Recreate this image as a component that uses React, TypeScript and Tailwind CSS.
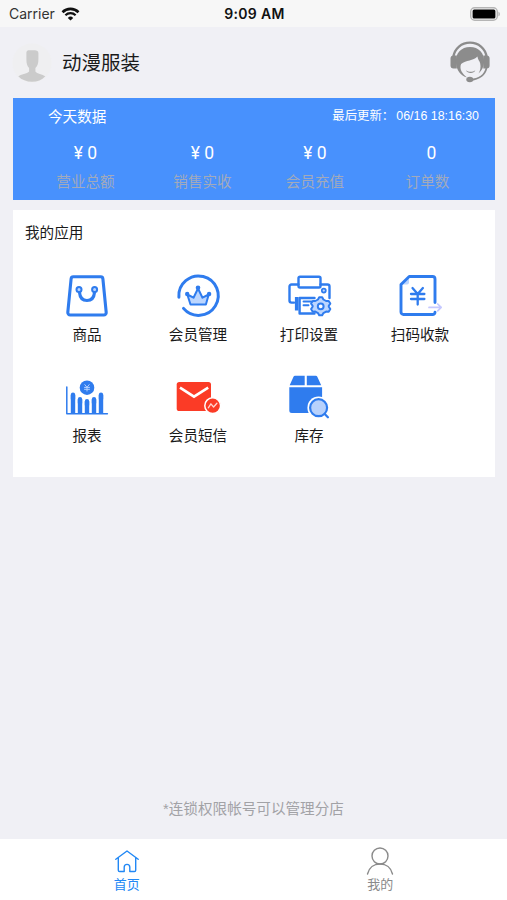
import type { ReactNode } from 'react'

const BLUE = '#2f7cee'

const stats = [
  { label: '营业总额', value: '¥ 0', width: 'w-[117px]' },
  { label: '销售实收', value: '¥ 0', width: 'w-[117px]' },
  { label: '会员充值', value: '¥ 0', width: 'w-[108px]' },
  { label: '订单数', value: '0', width: 'w-[125px]', labelClass: 'pr-[8px]' },
]

function AppIcon({ children }: { children: ReactNode }) {
  return (
    <svg className="size-[44px] shrink-0 overflow-visible" viewBox="0 0 44 44" fill="none" strokeLinecap="round" strokeLinejoin="round">
      {children}
    </svg>
  )
}

function BagIcon() {
  return (
    <AppIcon>
      <g stroke={BLUE} strokeWidth="3.1">
        <path d="M8.3 2.8h27.4a2.2 2.2 0 0 1 2.2 2l3.3 33.6a2.4 2.4 0 0 1-2.4 2.6H5.2a2.4 2.4 0 0 1-2.4-2.6L6.1 4.8a2.2 2.2 0 0 1 2.2-2Z" />
        <path d="M14.5 18.5C15 24 18 26.5 22 26.5s7-2.5 7.5-8" />
      </g>
      <circle cx="14" cy="15.5" r="2.5" fill="#bcd6ff" stroke={BLUE} strokeWidth="2" />
      <circle cx="29.6" cy="15.5" r="2.5" fill="#bcd6ff" stroke={BLUE} strokeWidth="2" />
    </AppIcon>
  )
}

function MemberIcon() {
  return (
    <AppIcon>
      <path d="M2.9 23.2A19.7 19.7 0 1 1 7.5 34.4" stroke={BLUE} strokeWidth="3" />
      <path d="m11.3 20.5 6.2 3.2L22 14.5l4.5 9.2 6.2-3.2-2.8 10H14.500Z" fill="#bcd6ff" stroke={BLUE} strokeWidth="2" />
      <g fill={BLUE}>
        <circle cx="11.2" cy="20" r="2.2" />
        <circle cx="22" cy="13.8" r="2.3" />
        <circle cx="33.1" cy="20" r="2.2" />
      </g>
    </AppIcon>
  )
}

function PrinterIcon() {
  return (
    <AppIcon>
      <g stroke={BLUE} strokeWidth="2.4">
        <path d="M11.5 10.5h-7a2 2 0 0 0-2 2v14.1a2 2 0 0 0 2 2H7M33.5 10.5h7a2 2 0 0 1 2 2V24" />
        <rect x="11.5" y="2.7" width="22" height="10.8" rx="1.5" />
        <circle cx="36.8" cy="16.6" r="2" fill="#bcd6ff" strokeWidth="1.7" />
        <path d="M9.700 23v13.5" strokeWidth="3.6" strokeLinecap="butt" />
        <path d="M27.5 24H12.6v15.5h14.900" />
        <path d="M16.5 27.5h8M16.5 31.2h5" strokeWidth="1.9" />
        <path
          d="m31 25.500 1.200-2.200h3l1.200 2.200 2.700 1.500 2.600-.1 1.600 2.700-1.500 2.200v1l1.500 2.200-1.600 2.700-2.600-.1-2.700 1.500-1.200 2.200h-3L31 39.100l-2.700-1.500-2.600.1-1.600-2.700 1.500-2.200v-1l-1.500-2.200 1.600-2.700 2.600.1Z"
          fill="#bcd6ff"
          strokeWidth="2"
        />
        <circle cx="33.7" cy="32.3" r="2.9" fill="#ffffff" strokeWidth="2" />
      </g>
    </AppIcon>
  )
}

function ScanPayIcon() {
  return (
    <AppIcon>
      <path d="M3 10.5h6a2 2 0 0 0 2-2V2Z" fill="#bcd6ff" />
      <g stroke={BLUE}>
        <path d="M37 28.5V5a2.5 2.5 0 0 0-2.5-2.500H11.2L3 10.5V38a2.5 2.5 0 0 0 2.5 2.500h29A2.500 2.500 0 0 0 37 38.300" strokeWidth="2.9" />
        <path d="m14.5 14 5.2 6 5.2-6M19.7 20v10.5M13 20h13.4M13 25h13.4" strokeWidth="2.3" />
      </g>
      <path d="M31 33.4h12M39.700 30l3.500 3.400-3.500 3.400" stroke="#c5c8ff" strokeWidth="1.7" />
    </AppIcon>
  )
}

function ReportIcon() {
  return (
    <AppIcon>
      <path d="M1.8 12v26.700h40.600" stroke={BLUE} strokeWidth="1.5" />
      <path d="M8 38V19.8M15 38V24.3M22 38V26.3M29 38V24.3M36 38V19.8" stroke={BLUE} strokeWidth="4.4" strokeLinecap="butt" />
      <path d="M8 24v-4.2M15 28v-3.7M22 30v-3.7M29 28v-3.7M36 24v-4.2" stroke={BLUE} strokeWidth="4.4" />
      <circle cx="22" cy="12.7" r="7.3" fill={BLUE} />
      <path d="m19.8 9.6 2.2 2.7 2.2-2.7M22 12.3V16M19.5 12.4h5M19.5 14.3h5" stroke="#b5d2ff" />
    </AppIcon>
  )
}

function SmsIcon() {
  return (
    <AppIcon>
      <rect x=".7" y="7" width="34.3" height="29" rx="2.6" fill="#fb3b26" />
      <path d="m4 12.700 14 9 14.200-9" stroke="#ffffff" strokeWidth="2.7" strokeLinecap="butt" strokeLinejoin="miter" />
      <circle cx="36.7" cy="30.7" r="7.9" fill="#fb3b26" stroke="#ffffff" strokeWidth="1.5" />
      <path d="m32.300 32.800 2.600-4 2.700 3.200 3.300-3.700" stroke="#ffd4cf" strokeWidth="1.3" />
    </AppIcon>
  )
}

function StockIcon() {
  return (
    <AppIcon>
      <path d="M17.7.8H8a1.7 1.7 0 0 0-1.5 1l-3.800 8.400h15ZM19.8.8h9a1.700 1.700 0 0 1 1.500 1l3.900 8.400H19.800Z" fill={BLUE} />
      <path d="M2.3 12.3h32.800v23.300a2.500 2.500 0 0 1-2.500 2.500H4.800a2.500 2.500 0 0 1-2.500-2.500Z" fill={BLUE} />
      <circle cx="31.6" cy="32.7" r="11.2" fill="#ffffff" />
      <circle cx="31.6" cy="32.7" r="8.5" fill="#b7d1fc" stroke={BLUE} strokeWidth="2.2" />
      <path d="m38.2 39.5 2.700 2.700" stroke={BLUE} strokeWidth="2.3" />
    </AppIcon>
  )
}

const apps = [
  { name: '商品', Icon: BagIcon },
  { name: '会员管理', Icon: MemberIcon },
  { name: '打印设置', Icon: PrinterIcon },
  { name: '扫码收款', Icon: ScanPayIcon },
  { name: '报表', Icon: ReportIcon },
  { name: '会员短信', Icon: SmsIcon },
  { name: '库存', Icon: StockIcon },
]

function StatusBar() {
  return (
    <div className="grid h-[27px] shrink-0 grid-cols-3 items-center bg-[#f7f7f7] pl-[9px] pr-[7px] font-['Inter','Liberation_Sans',sans-serif] text-[#111111]">
      <div className="flex items-center gap-[6px]">
        <span className="text-[14px] leading-none text-[#333333]">Carrier</span>
        <svg className="h-[14px] w-[19px]" viewBox="0 0 18 14" fill="none" stroke="#111111">
          <path d="M1 5.2a11.400 11.400 0 0 1 16 0" strokeWidth="2.6" />
          <path d="M3.900 8.300a7.300 7.300 0 0 1 10.200 0" strokeWidth="2.2" />
          <path d="M9 13.600 6.300 10.900a3.900 3.900 0 0 1 5.400 0Z" fill="#111111" stroke="none" />
        </svg>
      </div>
      <div className="pt-px text-center text-[14px] font-semibold leading-none tracking-[0.3px]">9:09 AM</div>
      <div className="flex justify-end">
        <svg className="h-[14px] w-[30px]" viewBox="0 0 30 14">
          <rect x=".7" y=".7" width="26.6" height="12.6" rx="4" fill="#f7f7f7" stroke="#b5b5b5" strokeWidth="1.4" />
          <rect x="2.6" y="2.4" width="22.8" height="9.2" rx="1.5" fill="#000000" />
          <path d="M28.5 4.7c1.700.6 1.700 4 0 4.600Z" fill="#aaaaaa" />
        </svg>
      </div>
    </div>
  )
}

function Avatar() {
  return (
    <svg className="size-[40px]" viewBox="0 0 40 40">
      <circle cx="20" cy="20" r="19.5" fill="#efeff1" />
      <path
        d="M14.400 9.500c0-1.800 1.300-2.300 3-2.300h5.400c2 0 3.600.8 3.600 2.800v6.500c0 3.800-1 6.700-3 8.600v3.300c1.500 2.600 7.200 2.600 9.900 4.900-3.300 3.800-8 5.500-13.300 5.500s-10.500-1.900-13.700-5.500c2.300-2.300 9-2.300 10.800-4.900v-3.300c-1.900-1.900-2.700-4.800-2.700-8.600Z"
        fill="#cbcbcb"
      />
    </svg>
  )
}

function ServiceIcon() {
  return (
    <svg className="mb-[2px] h-[42px] w-[42px]" viewBox="0 0 42 42" fill="none">
      <path d="M4.3 16C5.7 7.3 12.5 1.7 21 1.7S36.300 7.300 37.700 16" stroke="#8c8c8c" strokeWidth="2.3" />
      <path d="M4.5 14.5h3.300v13H4.500a3 3 0 0 1-3-3v-7a3 3 0 0 1 3-3ZM34.300 14.500h3.300a3 3 0 0 1 3 3v7a3 3 0 0 1-3 3h-3.300Z" fill="#8c8c8c" />
      <path d="M7 22C6 12 12.500 6 21 6s15 6 14 16c-.3 4-2.300 8-5.500 10.500 1.800-3 2.500-6 1.700-10-.5-2.500-2.200-3.500-2.800-7-4 4.500-11.500 3.500-16.300 7.500-2 5 1 9.500 6 13.500C11.500 35 7.500 29 7 22Z" fill="#8c8c8c" />
      <path d="M17 29.200c2.700 2 6.600 2 9.300 0-1 3.600-8 3.800-9.300 0Z" fill="#8c8c8c" />
      <path d="M37.500 27c-1.300 6-6.500 11.300-16.500 11.800" stroke="#8c8c8c" strokeWidth="1.7" />
      <ellipse cx="20.8" cy="38.5" rx="3.5" ry="2.8" fill="#8c8c8c" />
    </svg>
  )
}

export default function App() {
  return (
    <div className="flex h-[900px] w-[507px] flex-col overflow-hidden bg-[#f0f0f5] font-['Liberation_Sans','Noto_Sans_CJK_SC',sans-serif] text-[#1a1a1a]">
      <StatusBar />

      <header className="flex h-[71px] shrink-0 items-center justify-between pl-3 pr-4">
        <div className="flex items-center gap-[10px]">
          <Avatar />
          <h1 className="pt-[2px] text-[19.5px] leading-none">动漫服装</h1>
        </div>
        <ServiceIcon />
      </header>

      <section className="mx-[13px] flex h-[102px] w-[482px] shrink-0 flex-col bg-[#4891fd] text-white">
        <div className="flex h-[39px] items-center justify-between pl-[35px] pr-4">
          <span className="text-[14.6px]">今天数据</span>
          <span className="flex items-center pb-[3px] text-[12.4px]">
            <span className="w-[64px]">最后更新：</span>
            <span>06/16 18:16:30</span>
          </span>
        </div>
        <div className="flex pl-[14px]">
          {stats.map(s => (
            <div key={s.label} className={`flex flex-col items-center ${s.width}`}>
              <span className="font-['Roboto','Noto_Sans_CJK_SC',sans-serif] text-[17.5px] leading-[32px]">{s.value}</span>
              <span className={`text-[14.6px] leading-[27px] text-[#a2aabb] ${s.labelClass ?? ''}`}>{s.label}</span>
            </div>
          ))}
        </div>
      </section>

      <section className="mx-[13px] mt-[10px] h-[267px] w-[482px] shrink-0 bg-white">
        <h2 className="pl-[12px] pt-[12px] text-[14.6px] leading-[22px]">我的应用</h2>
        <div className="mt-[30px] grid grid-cols-[repeat(4,111px)] pl-[18.5px]">
          {apps.map(({ name, Icon }) => (
            <div key={name} className="flex h-[101px] flex-col items-center">
              <Icon />
              <span className="mt-[6px] text-[14.6px] leading-[22px]">{name}</span>
            </div>
          ))}
        </div>
      </section>

      <p className="mt-auto mb-[19px] text-center text-[14.6px] leading-[22px] text-[#a2a2a6]">*连锁权限帐号可以管理分店</p>

      <nav className="grid h-[61px] shrink-0 grid-cols-2 bg-white text-[13px]">
        <div className="flex flex-col items-center pt-[10px] text-[#2288f5]">
          <svg className="h-[25px] w-[26px]" viewBox="0 0 26 25" fill="none" stroke="currentColor" strokeWidth="1.4" strokeLinejoin="round" strokeLinecap="round">
            <path d="M1.800 10.300 13 2l11.200 8.300M4.300 8.700v12.500a1.300 1.300 0 0 0 1.300 1.300h4.600v-4.300a2.800 2.800 0 0 1 5.600 0v4.300h4.600a1.300 1.300 0 0 0 1.300-1.300V8.700" />
          </svg>
          <span className="pt-px leading-[20px]">首页</span>
        </div>
        <div className="flex flex-col items-center pt-[8px] text-[#8a8a8a]">
          <svg className="h-[28px] w-[28px]" viewBox="0 0 28 28" fill="none" stroke="currentColor" strokeWidth="1.4" strokeLinecap="round">
            <circle cx="14" cy="9" r="8" />
            <path d="M1.500 27C3 20.500 8 17 14 17s11 3.500 12.500 10" />
          </svg>
          <span className="leading-[19px]">我的</span>
        </div>
      </nav>
    </div>
  )
}
